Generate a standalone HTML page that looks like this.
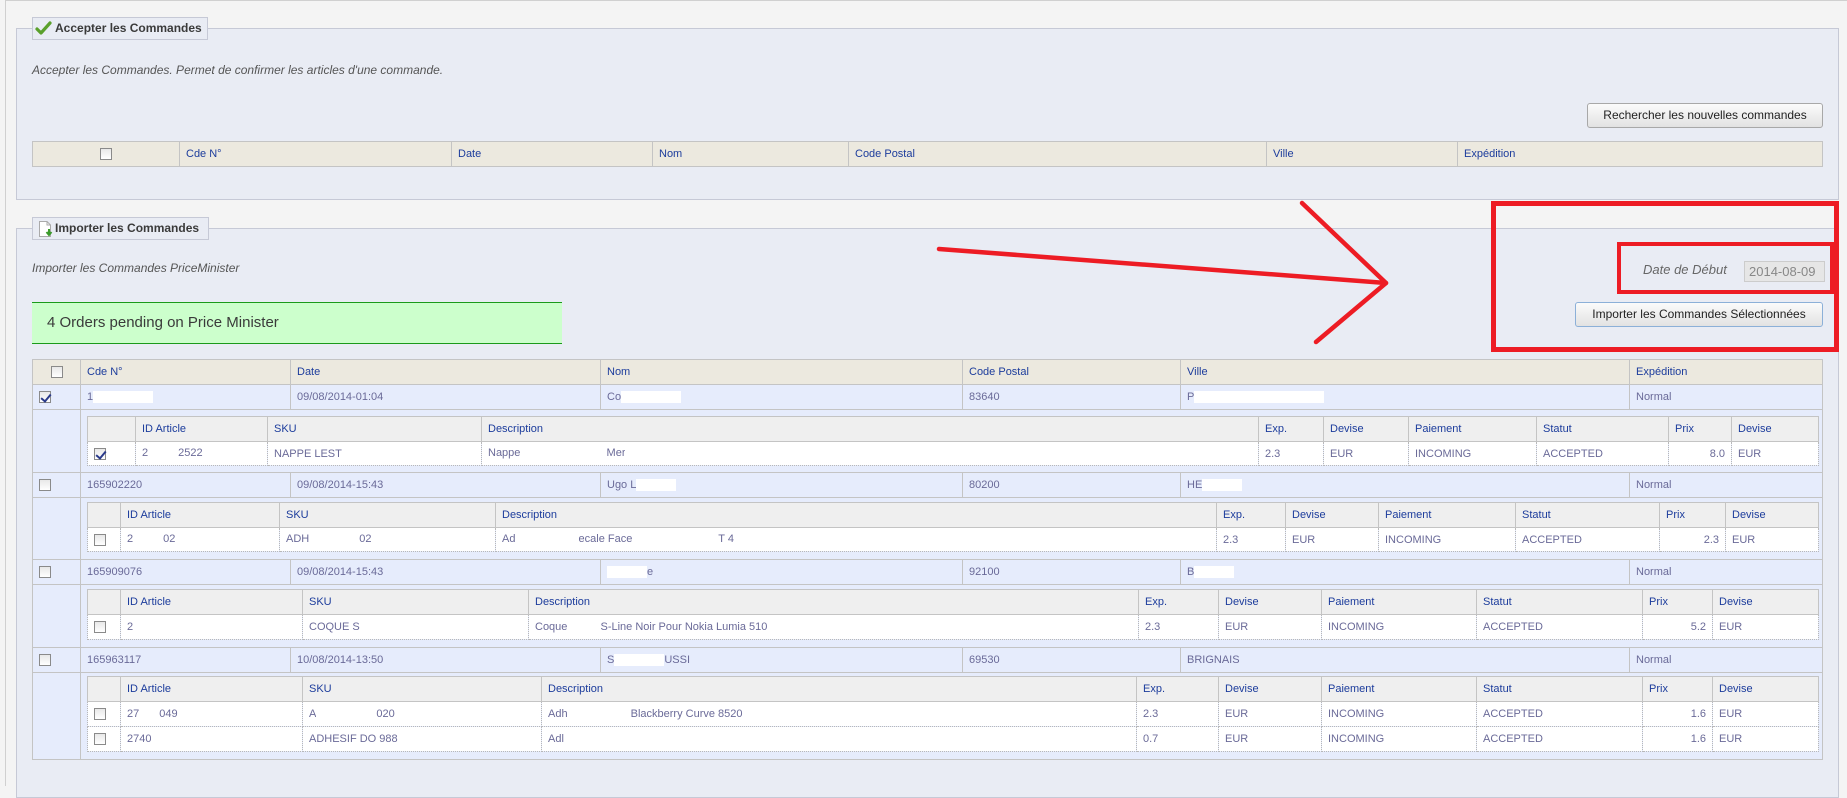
<!DOCTYPE html>
<html><head><meta charset="utf-8">
<style>
*{box-sizing:border-box;margin:0;padding:0}
body{width:1847px;height:786px;background:#f4f4f4;font-family:"Liberation Sans",Arial,sans-serif;font-size:11px;position:relative;overflow:hidden}
.abs{position:absolute}
.pg{left:5px;top:0;width:1842px;height:786px;border-left:1px solid #d0d0d0;border-top:1px solid #d0d0d0}
.fs{background:#e9ecf4;border:1px solid #c6c9d6}
.legend{background:#e9ecf4;border:1px solid #c6c9d6;font-weight:bold;color:#3a3a3a;font-size:12px;padding-left:22px;line-height:21px}
.desc{font-style:italic;color:#555;font-size:12px}
table{border-collapse:collapse;table-layout:fixed;position:absolute}
td{border:1px solid #c4c4c4;padding:0 6px;white-space:nowrap;overflow:hidden;color:#6a6a98;font-size:11px}
tr.h td{background:#ece9df;color:#1c3c9c}
tr.r td{background:#e6ecfc}
tr.nh td{background:#efefef;color:#1c3c9c}
tr.nd td{background:#fff;border:1px dotted #b8b8b8}
.cb{display:inline-block;width:12px;height:12px;border:1px solid #8a8a8a;background:linear-gradient(#e8e8e8,#fff);vertical-align:middle;position:relative}
.ck::after{content:"";position:absolute;left:3px;top:0px;width:4px;height:8px;border-right:2px solid #2a3a8a;border-bottom:2px solid #2a3a8a;transform:rotate(40deg)}
.w{display:inline-block;background:#fff;height:12px;vertical-align:middle}
.btn{background:linear-gradient(#fbfbfb,#e2e2e2);border:1px solid #a8a8a8;border-radius:3px;font-size:12px;color:#222;text-align:center}
.red{border:5px solid #ed1c24}
</style></head><body>
<div class="abs pg"></div>

<!-- fieldset 1 -->
<div class="abs fs" style="left:16px;top:28px;width:1823px;height:172px"></div>
<div class="abs legend" style="left:32px;top:17px;width:176px;height:23px">Accepter les Commandes</div>
<svg class="abs" style="left:35px;top:21px" width="17" height="15" viewBox="0 0 17 15"><path d="M2 8 L6 12 L15 2" fill="none" stroke="#5aa02c" stroke-width="3.2" stroke-linecap="round" stroke-linejoin="round"/></svg>
<div class="abs desc" style="left:32px;top:63px">Accepter les Commandes. Permet de confirmer les articles d'une commande.</div>
<div class="abs btn" style="left:1587px;top:103px;width:236px;height:25px;line-height:23px">Rechercher les nouvelles commandes</div>
<table style="left:32px;top:141px;width:1790px">
<colgroup><col style="width:147px"><col style="width:272px"><col style="width:201px"><col style="width:196px"><col style="width:418px"><col style="width:191px"><col style="width:365px"></colgroup>
<tr class="h" style="height:25px"><td style="text-align:center"><span class="cb"></span></td><td>Cde N°</td><td>Date</td><td>Nom</td><td>Code Postal</td><td>Ville</td><td>Expédition</td></tr>
</table>

<!-- fieldset 2 -->
<div class="abs fs" style="left:16px;top:228px;width:1823px;height:570px"></div>
<div class="abs legend" style="left:32px;top:217px;width:177px;height:23px">Importer les Commandes</div>
<svg class="abs" style="left:38px;top:220px" width="16" height="18" viewBox="0 0 16 18"><path d="M1.5 1.5 H9 L12.5 5 V16.5 H1.5 Z" fill="#fff" stroke="#aaa"/><path d="M9 1.5 V5 H12.5" fill="none" stroke="#aaa"/><path d="M11 9 V14 M8.5 12 L11 15 L13.5 12" fill="none" stroke="#3a9a2a" stroke-width="2"/></svg>
<div class="abs desc" style="left:32px;top:261px">Importer les Commandes PriceMinister</div>
<div class="abs" style="left:32px;top:302px;width:530px;height:42px;background:#ccffcc;border-top:1px solid #1a9a1a;border-bottom:1px solid #1a9a1a;font-size:15px;color:#3a3a3a;line-height:40px;padding-left:15px">4 Orders pending on Price Minister</div>

<div class="abs desc" style="left:1643px;top:262px;font-size:13px;color:#666">Date de Début</div>
<div class="abs" style="left:1744px;top:261px;width:81px;height:21px;background:#e6e6e6;border:1px solid #ccc;color:#888;font-size:13px;line-height:19px;padding-left:4px">2014-08-09</div>
<div class="abs btn" style="left:1575px;top:302px;width:248px;height:25px;line-height:23px;border-color:#8cb0d8">Importer les Commandes Sélectionnées</div>

<table style="left:32px;top:359px;width:1790px">
<colgroup><col style="width:48px"><col style="width:210px"><col style="width:310px"><col style="width:362px"><col style="width:218px"><col style="width:449px"><col style="width:193px"></colgroup>
<tr class="h" style="height:25px"><td style="text-align:center"><span class="cb"></span></td><td>Cde N°</td><td>Date</td><td>Nom</td><td>Code Postal</td><td>Ville</td><td>Expédition</td></tr>
<tr class="r" style="height:25px"><td><span class="cb ck"></span></td><td>1<span class="w" style="width:60px"></span></td><td>09/08/2014-01:04</td><td>Co<span class="w" style="width:60px"></span></td><td>83640</td><td>P<span class="w" style="width:130px"></span></td><td>Normal</td></tr>
<tr class="r" style="height:63px"><td></td><td colspan="6"></td></tr>
<tr class="r" style="height:25px"><td><span class="cb"></span></td><td>165902220</td><td>09/08/2014-15:43</td><td>Ugo L<span class="w" style="width:40px"></span></td><td>80200</td><td>HE<span class="w" style="width:40px"></span></td><td>Normal</td></tr>
<tr class="r" style="height:62px"><td></td><td colspan="6"></td></tr>
<tr class="r" style="height:25px"><td><span class="cb"></span></td><td>165909076</td><td>09/08/2014-15:43</td><td><span class="w" style="width:40px"></span>e</td><td>92100</td><td>B<span class="w" style="width:40px"></span></td><td>Normal</td></tr>
<tr class="r" style="height:63px"><td></td><td colspan="6"></td></tr>
<tr class="r" style="height:25px"><td><span class="cb"></span></td><td>165963117</td><td>10/08/2014-13:50</td><td>S<span class="w" style="width:50px"></span>USSI</td><td>69530</td><td>BRIGNAIS</td><td>Normal</td></tr>
<tr class="r" style="height:87px"><td></td><td colspan="6"></td></tr>
</table>

<!-- nested 1 -->
<table style="left:87px;top:416px;width:1731px">
<colgroup><col style="width:48px"><col style="width:132px"><col style="width:214px"><col style="width:777px"><col style="width:65px"><col style="width:85px"><col style="width:128px"><col style="width:132px"><col style="width:63px"><col style="width:87px"></colgroup>
<tr class="nh" style="height:25px"><td></td><td>ID Article</td><td>SKU</td><td>Description</td><td>Exp.</td><td>Devise</td><td>Paiement</td><td>Statut</td><td>Prix</td><td>Devise</td></tr>
<tr class="nd" style="height:24px"><td><span class="cb ck"></span></td><td>2<span class="w" style="width:30px"></span>2522</td><td>NAPPE LEST</td><td>Nappe <span class="w" style="width:80px"></span> Mer<span class="w" style="width:200px"></span></td><td>2.3</td><td>EUR</td><td>INCOMING</td><td>ACCEPTED</td><td style="text-align:right">8.0</td><td>EUR</td></tr>
</table>
<!-- nested 2 -->
<table style="left:87px;top:502px;width:1731px">
<colgroup><col style="width:33px"><col style="width:159px"><col style="width:216px"><col style="width:721px"><col style="width:69px"><col style="width:93px"><col style="width:137px"><col style="width:144px"><col style="width:66px"><col style="width:93px"></colgroup>
<tr class="nh" style="height:25px"><td></td><td>ID Article</td><td>SKU</td><td>Description</td><td>Exp.</td><td>Devise</td><td>Paiement</td><td>Statut</td><td>Prix</td><td>Devise</td></tr>
<tr class="nd" style="height:24px"><td><span class="cb"></span></td><td>2<span class="w" style="width:30px"></span>02</td><td>ADH<span class="w" style="width:50px"></span>02</td><td>Ad<span class="w" style="width:60px"></span> ecale Face <span class="w" style="width:80px"></span> T 4</td><td>2.3</td><td>EUR</td><td>INCOMING</td><td>ACCEPTED</td><td style="text-align:right">2.3</td><td>EUR</td></tr>
</table>
<!-- nested 3 -->
<table style="left:87px;top:589px;width:1731px">
<colgroup><col style="width:33px"><col style="width:182px"><col style="width:226px"><col style="width:610px"><col style="width:80px"><col style="width:103px"><col style="width:155px"><col style="width:166px"><col style="width:70px"><col style="width:106px"></colgroup>
<tr class="nh" style="height:25px"><td></td><td>ID Article</td><td>SKU</td><td>Description</td><td>Exp.</td><td>Devise</td><td>Paiement</td><td>Statut</td><td>Prix</td><td>Devise</td></tr>
<tr class="nd" style="height:25px"><td><span class="cb"></span></td><td>2</td><td>COQUE S<span class="w" style="width:30px"></span></td><td>Coque<span class="w" style="width:30px"></span> S-Line Noir Pour Nokia Lumia 510</td><td>2.3</td><td>EUR</td><td>INCOMING</td><td>ACCEPTED</td><td style="text-align:right">5.2</td><td>EUR</td></tr>
</table>
<!-- nested 4 -->
<table style="left:87px;top:676px;width:1731px">
<colgroup><col style="width:33px"><col style="width:182px"><col style="width:239px"><col style="width:595px"><col style="width:82px"><col style="width:103px"><col style="width:155px"><col style="width:166px"><col style="width:70px"><col style="width:106px"></colgroup>
<tr class="nh" style="height:25px"><td></td><td>ID Article</td><td>SKU</td><td>Description</td><td>Exp.</td><td>Devise</td><td>Paiement</td><td>Statut</td><td>Prix</td><td>Devise</td></tr>
<tr class="nd" style="height:25px"><td><span class="cb"></span></td><td>27<span class="w" style="width:20px"></span>049</td><td>A<span class="w" style="width:60px"></span>020</td><td>Adh<span class="w" style="width:60px"></span> Blackberry Curve 8520</td><td>2.3</td><td>EUR</td><td>INCOMING</td><td>ACCEPTED</td><td style="text-align:right">1.6</td><td>EUR</td></tr>
<tr class="nd" style="height:25px"><td><span class="cb"></span></td><td>2740<span class="w" style="width:30px"></span></td><td>ADHESIF DO 988</td><td>Adl<span class="w" style="width:200px"></span></td><td>0.7</td><td>EUR</td><td>INCOMING</td><td>ACCEPTED</td><td style="text-align:right">1.6</td><td>EUR</td></tr>
</table>

<!-- red annotations -->
<div class="abs red" style="left:1491px;top:201px;width:348px;height:151px"></div>
<div class="abs red" style="left:1617px;top:242px;width:217px;height:52px;border-width:4px"></div>
<svg class="abs" style="left:0;top:0" width="1847" height="786"><g fill="none" stroke="#ed1c24" stroke-width="4.5" stroke-linecap="round" stroke-linejoin="round"><path d="M939 249 L1386 283"/><path d="M1302 203 L1386 283 L1316 342"/></g></svg>
</body></html>
